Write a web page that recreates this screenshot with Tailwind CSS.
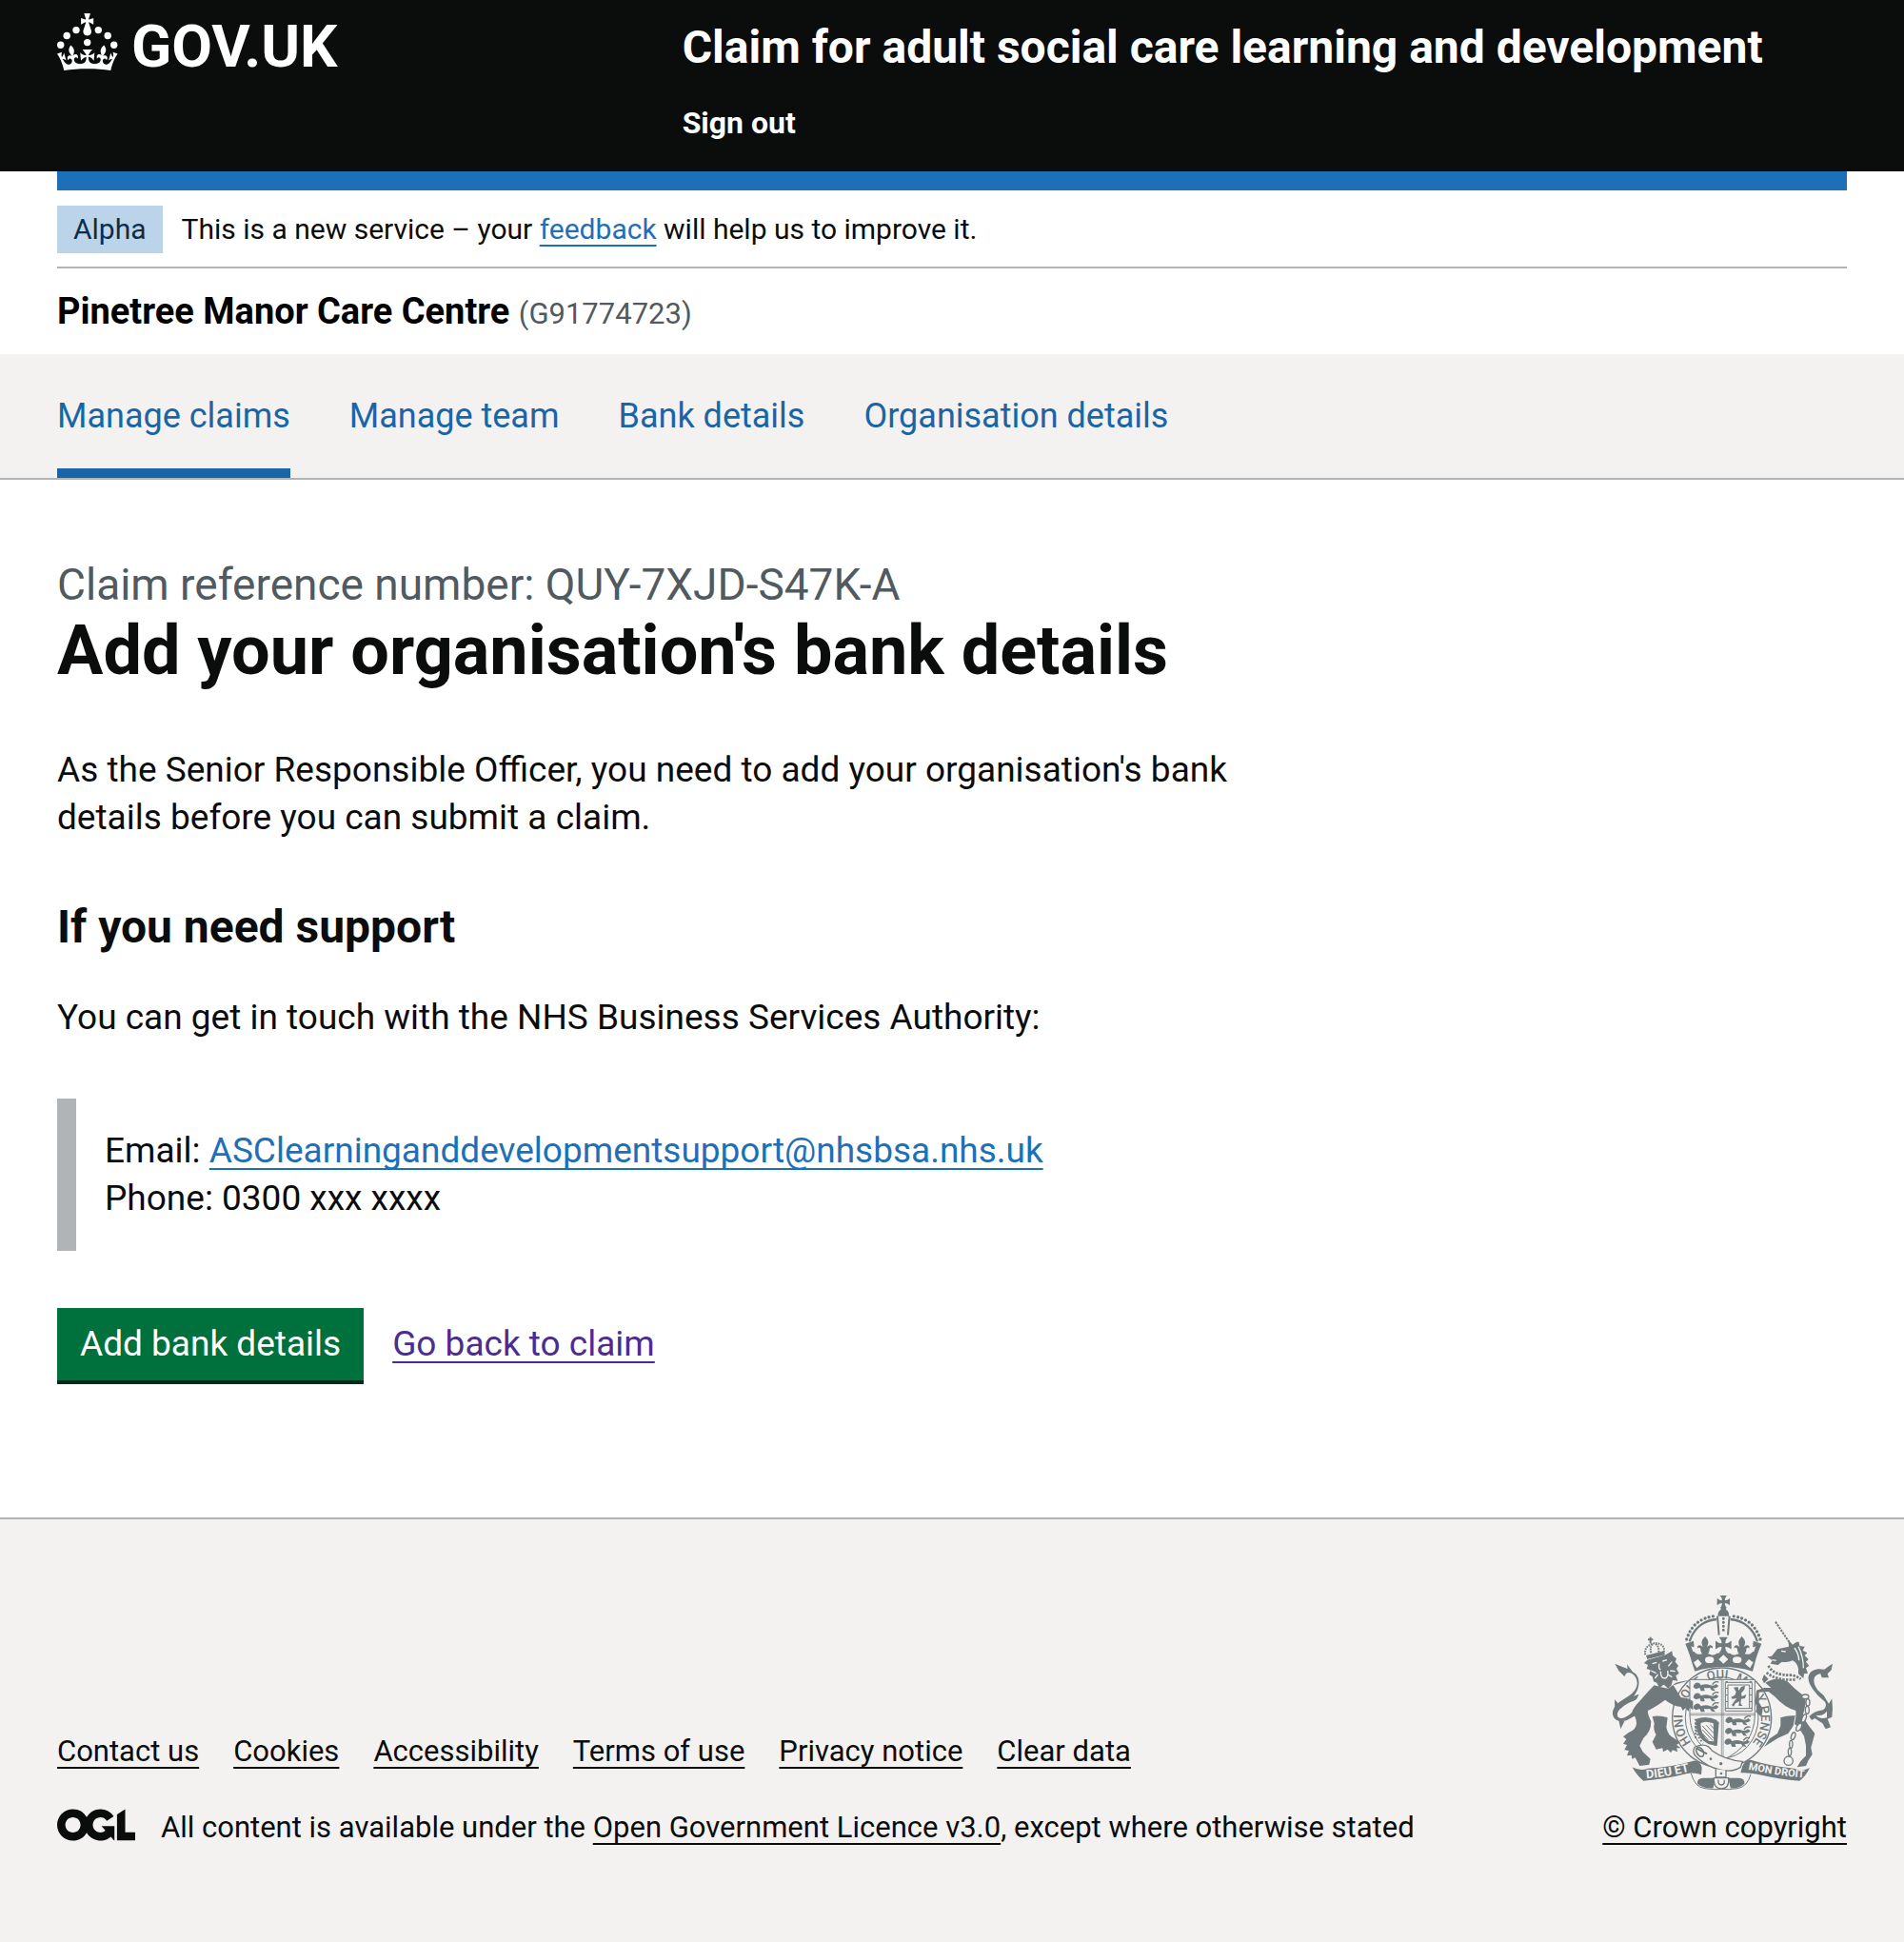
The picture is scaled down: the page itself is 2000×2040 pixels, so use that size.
<!DOCTYPE html>
<html lang="en">
<head>
<meta charset="utf-8">
<meta name="viewport" content="width=device-width, initial-scale=1">
<title>Add your organisation's bank details</title>
<script src="https://cdn.jsdelivr.net/npm/@tailwindcss/browser@4"></script>
</head>
<body class="bg-white font-[Roboto,sans-serif] text-[#0b0c0c]">

<header class="bg-[#0b0c0c] px-[60px] text-white">
  <div class="flex items-start pb-[31px]">
    <a href="#" class="w-1/3 pt-[14px]" aria-label="GOV.UK">
      <svg class="block h-[80px] w-[300px] fill-white" viewBox="0 0 300 80" aria-hidden="true">
        <circle cx="20" cy="17.6" r="3.7"/><circle cx="10.2" cy="23.5" r="3.7"/><circle cx="3.7" cy="33.2" r="3.7"/>
        <circle cx="31.7" cy="30.6" r="3.7"/><circle cx="43.3" cy="17.6" r="3.7"/><circle cx="53.2" cy="23.5" r="3.7"/><circle cx="59.7" cy="33.2" r="3.7"/>
        <path d="M33.1,9.8c.2-.1.3-.3.5-.5l4.6,2.4v-6.8l-4.6,1.5c-.1-.2-.3-.3-.5-.5l1.9-5.9h-6.7l1.9,5.9c-.2.1-.3.3-.5.5l-4.6-1.5v6.8l4.6-2.4c.1.2.3.3.5.5l-2.6,8c-.9,2.8,1.2,5.7,4.1,5.7h0c3,0,5.1-2.9,4.1-5.7l-2.6-8ZM37,37.9s-3.4,3.8-4.1,6.1c2.2,0,4.2-.5,6.4-2.8l-.7,8.5c-2-2.8-4.4-4.1-5.7-3.8.1,3.1.5,6.7,5.8,7.2,3.7.3,6.7-1.5,7-3.8.4-2.6-2-4.3-3.7-1.6-1.4-4.5,2.4-6.1,4.9-3.2-1.9-4.5-1.8-7.7,2.4-10.9,3,4,2.6,7.3-1.2,11.1,2.4-1.3,6.2,0,4,4.6-1.2-2.8-3.7-2.2-4.2.2-.3,1.7.7,3.7,3,4.2,1.9.3,4.7-.9,7-5.9-1.3,0-2.4.7-3.9,1.7l2.4-8c.6,2.3,1.4,3.7,2.2,4.5.6-1.6.5-2.8,0-5.3l5,1.8c-2.6,3.6-5.2,8.7-7.3,17.5-7.4-1.1-15.7-1.7-24.5-1.7h0c-8.8,0-17.1.6-24.5,1.7-2.1-8.9-4.7-13.9-7.3-17.5l5-1.8c-.5,2.5-.6,3.7,0,5.3.8-.8,1.6-2.3,2.2-4.5l2.4,8c-1.5-1-2.6-1.7-3.9-1.7,2.3,5,5.2,6.2,7,5.9,2.3-.4,3.3-2.4,3-4.2-.5-2.4-3-3.1-4.2-.2-2.2-4.6,1.6-6,4-4.6-3.7-3.7-4.2-7.1-1.2-11.1,4.2,3.2,4.3,6.4,2.4,10.9,2.5-2.8,6.3-1.3,4.9,3.2-1.8-2.7-4.1-1-3.7,1.6.3,2.3,3.3,4.1,7,3.8,5.4-.5,5.7-4.2,5.8-7.2-1.3-.2-3.7,1-5.7,3.8l-.7-8.5c2.2,2.3,4.2,2.7,6.4,2.8-.7-2.3-4.1-6.1-4.1-6.1h10.6,0Z"/>
        <text x="78" y="56" class="text-[62px] font-bold">GOV.UK</text>
      </svg>
    </a>
    <div class="flex-1 pt-5 pl-[30px]">
      <a href="#" class="block text-[48px] leading-[60px] font-bold">Claim for adult social care learning and development</a>
      <nav class="mt-[29px]" aria-label="Account">
        <a href="#" class="text-[32px] leading-[40px] font-bold">Sign out</a>
      </nav>
    </div>
  </div>
</header>

<div class="mx-[60px] border-t-20 border-[#1d70b8]"></div>

<div class="mx-[60px] flex items-center gap-5 border-b-2 border-[#b1b4b6] pt-4 pb-[14px] text-[30px] leading-[50px]">
  <strong class="bg-[#bbd4ea] px-[17px] font-normal text-[#0c2d4a]">Alpha</strong>
  <span>This is a new service – your <a href="#" class="text-[#1d70b8] underline decoration-2 underline-offset-[6px] [text-decoration-skip-ink:none]">feedback</a> will help us to improve it.</span>
</div>

<div class="px-[60px] py-5 text-[38px] leading-[50px] font-bold text-black">Pinetree Manor Care Centre <span class="text-[31px] leading-none font-normal text-[#505a5f]">(G91774723)</span></div>

<nav class="border-b-2 border-[#b1b4b6] bg-[#f3f2f1] px-[60px]" aria-label="Service">
  <ul class="flex gap-[62px] text-[36px] leading-[50px] text-[#1a65a6]">
    <li><a href="#" aria-current="page" class="block py-10 shadow-[inset_0_-10px_0_#1a65a6]">Manage claims</a></li>
    <li><a href="#" class="block py-10">Manage team</a></li>
    <li><a href="#" class="block py-10">Bank details</a></li>
    <li><a href="#" class="block py-10">Organisation details</a></li>
  </ul>
</nav>

<main class="px-[60px] pt-20 pb-36 text-[37px] leading-[50px]">
  <div class="w-2/3">
    <h1 class="mb-[60px] text-[72px] leading-[80px] font-bold"><span class="block text-[46px] leading-[60px] font-normal text-[#505a5f]">Claim reference number: QUY-7XJD-S47K-A</span>Add your organisation's bank details</h1>
    <p class="mb-[60px]">As the Senior Responsible Officer, you need to add your organisation's bank details before you can submit a claim.</p>
    <h2 class="mb-10 text-[48px] leading-[60px] font-bold">If you need support</h2>
    <p>You can get in touch with the NHS Business Services Authority:</p>
    <div class="my-[60px] border-l-20 border-[#b1b4b6] p-[30px]">
      <p>Email: <a href="#" class="text-[#1d70b8] underline decoration-2 underline-offset-[6px] [text-decoration-skip-ink:none]">ASClearninganddevelopmentsupport@nhsbsa.nhs.uk</a></p>
      <p>Phone: 0300 xxx xxxx</p>
    </div>
    <div class="flex items-center gap-[30px]">
      <button type="button" class="bg-[#00703c] px-6 py-[13px] text-white shadow-[0_4px_0_#002d18]">Add bank details</button>
      <a href="#" class="text-[#4c2c92] underline decoration-2 underline-offset-[6px] [text-decoration-skip-ink:none]">Go back to claim</a>
    </div>
  </div>
</main>

<footer class="border-t-2 border-[#b1b4b6] bg-[#f3f2f1] px-[60px] pt-20 pb-[100px] text-[31px] leading-[40px]">
  <div class="flex items-end justify-between">
    <div>
      <ul class="mb-10 flex gap-9">
        <li><a href="#" class="underline decoration-2 underline-offset-[6px] [text-decoration-skip-ink:none]">Contact us</a></li>
        <li><a href="#" class="underline decoration-2 underline-offset-[6px] [text-decoration-skip-ink:none]">Cookies</a></li>
        <li><a href="#" class="underline decoration-2 underline-offset-[6px] [text-decoration-skip-ink:none]">Accessibility</a></li>
        <li><a href="#" class="underline decoration-2 underline-offset-[6px] [text-decoration-skip-ink:none]">Terms of use</a></li>
        <li><a href="#" class="underline decoration-2 underline-offset-[6px] [text-decoration-skip-ink:none]">Privacy notice</a></li>
        <li><a href="#" class="underline decoration-2 underline-offset-[6px] [text-decoration-skip-ink:none]">Clear data</a></li>
      </ul>
      <div class="flex items-start gap-[27px]">
        <svg class="h-[34px] w-[82px] fill-[#0b0c0c]" viewBox="0 0 483.2 195.7" aria-hidden="true"><path d="M421.5 142.8V.1l-50.7 32.3v161.1h112.4v-50.7zm-122.3-9.6A47.12 47.12 0 0 1 221 97.8c0-26 21.1-47.1 47.1-47.1 16.7 0 31.4 8.7 39.7 21.8l42.7-27.2A97.63 97.63 0 0 0 268.1 0c-36.5 0-68.3 20.1-85.1 49.7A98 98 0 0 0 97.8 0C43.9 0 0 43.9 0 97.8s43.9 97.8 97.8 97.8c36.5 0 68.3-20.1 85.1-49.7a97.76 97.76 0 0 0 149.6 25.4l19.4 22.2h3v-87.8h-80l24.3 27.5zM97.8 145c-26 0-47.1-21.1-47.1-47.1s21.1-47.1 47.1-47.1 47.1 21.1 47.1 47.1S123.8 145 97.8 145"/></svg>
        <span>All content is available under the <a href="#" class="underline decoration-2 underline-offset-[6px] [text-decoration-skip-ink:none]">Open Government Licence v3.0</a>, except where otherwise stated</span>
      </div>
    </div>
    <a href="#" class="flex flex-col items-end gap-[19px]">
      <svg class="mr-[14px] h-[205px] w-[234px]" viewBox="69 47 702 615" fill="#707a7c" stroke="none" aria-hidden="true">
        <defs>
          <path id="garter" d="M357 540A124 124 0 1 1 481 540"/>
          <path id="motto-left" d="M182 624Q256 617 340 596"/>
          <path id="motto-right" d="M502 595Q590 614 684 622"/>
          <path id="patee" d="M-11-20H11Q3-10 5-4Q12-4 20-11V11Q12 4 5 4Q3 10 11 20H-11Q-3 10-5 4Q-12 4-20 11V-11Q-12-4-5-4Q-3-10-11-20Z"/>
          <g id="fleur"><path d="M0-30C16-14 10-6 5 6C10-4 26-6 24 8C20 2 12 6 14 16L8 28H-8L-14 16C-12 6-20 2-24 8C-26-6-10-4-5 6C-10-6-16-14 0-30Z"/></g>
          <g id="leopard"><path d="M2 4Q10-6 20 0L24 6Q40 0 54 6Q64 10 72 2L80 8Q72 18 62 14L70 24L58 22L52 14Q42 16 34 14L36 24L24 24L20 14L8 18L0 12Z"/><path d="M60 4Q66-8 80-4" fill="none" stroke="#707a7c" stroke-width="4"/></g>
        </defs>

        <!-- royal crown -->
        <use href="#patee" x="424" y="67"/>
        <path d="M418 84h12l3 8q10 6 8 20h-34q-2-14 8-20z"/>
        <g fill="none" stroke="#707a7c">
          <path d="M405 112l5 60M443 112l-5 60" stroke-width="6"/>
          <path d="M317 192C330 152 360 126 402 122M531 192C518 152 488 126 446 122" stroke-width="7"/>
          <path d="M308 185C322 142 350 117 396 112M540 185C526 142 498 117 452 112" stroke-width="10" stroke-linecap="round" stroke-dasharray="0 13"/>
          <path d="M424 120V168" stroke-width="9" stroke-linecap="round" stroke-dasharray="0 12"/>
        </g>
        <path d="M304 199L330 190L333 226Q346 238 362 228L382 232Q392 238 402 230L419 226H429L446 230Q456 238 466 232L486 228Q502 238 515 226L518 190L544 199Q530 232 524 256L516 286Q424 258 334 286L324 256Q318 232 304 199Z"/>
        <path d="M322 206Q330 214 340 206L338 224L328 224ZM526 206Q518 214 508 206L510 224L520 224Z" fill="#f3f2f1"/>
        <use href="#fleur" x="366" y="206"/><use href="#fleur" x="482" y="206"/>
        <g transform="translate(424 203) scale(1.25)"><use href="#patee"/></g>
        <g fill="#f3f2f1"><ellipse cx="380" cy="250" rx="14" ry="10"/><ellipse cx="467" cy="250" rx="14" ry="10"/><path d="M424 234l15 14-15 14-15-14zM344 248l12 14-16 14-10-18zM504 248l-12 14 16 14 10-18z"/></g>

        <!-- garter -->
        <ellipse cx="419" cy="432" rx="156" ry="157" fill="#f3f2f1" stroke="#707a7c" stroke-width="4"/>
        <ellipse cx="419" cy="432" rx="115" ry="128" fill="none" stroke="#707a7c" stroke-width="3"/>
        <g class="text-[39px] font-medium">
          <text><textPath href="#garter" startOffset="46">HONI</textPath></text>
          <text><textPath href="#garter" startOffset="166">SOI</textPath></text>
          <text><textPath href="#garter" startOffset="238">T</textPath></text>
          <text><textPath href="#garter" startOffset="280">QUI</textPath></text>
          <text><textPath href="#garter" startOffset="366">M</textPath></text>
          <text><textPath href="#garter" startOffset="450">Y PENSE</textPath></text>
        </g>

        <!-- shield -->
        <path d="M318 312H523V425Q521 520 421 566Q320 520 318 425Z" fill="#f3f2f1" stroke="#707a7c" stroke-width="3"/>
        <path d="M418 312V560M423 312V560M318 419H523M318 424H523" stroke="#707a7c" stroke-width="2"/>
        <use href="#leopard" x="329" y="324"/><use href="#leopard" x="329" y="357"/><use href="#leopard" x="329" y="390"/>
        <use href="#leopard" x="430" y="432"/><use href="#leopard" x="429" y="466"/><use href="#leopard" x="427" y="500"/>
        <g fill="none" stroke="#707a7c"><path d="M430 321H514V411H430Z" stroke-width="3"/><path d="M438 329H506V403H438Z" stroke-width="3"/><path d="M434 317V415M510 317V415" stroke-width="7" stroke-dasharray="3 18"/></g>
        <path d="M456 337l14-2 2 12 8-12 12-4-2 12-10 12 2 10 14-6-4 12-12 2-2 14 6 8h-12l2-14-12 6-6 10-6-4 8-12 8-10-14 2-4-6 12-6 4-10z"/>
        <path d="M338 436Q370 424 404 440L402 456L392 450Q366 440 352 450Q352 490 378 505L404 508L402 520L378 516Q346 500 340 470Z"/>
        <path d="M392 440L410 445L404 520H394Z"/>
        <path d="M358 458L396 500M358 470L390 504M370 456L398 486M382 454L399 472M358 482L376 502" stroke="#707a7c" stroke-width="3"/>
        <path d="M336 436V498M340 440Q330 480 360 512" fill="none" stroke="#707a7c" stroke-width="6" stroke-dasharray="5 6"/>

        <!-- lion supporter -->
        <g fill="none" stroke="#707a7c">
          <path d="M178 234C168 190 246 184 236 226M196 228Q190 204 206 198M220 226Q222 204 206 198" stroke-width="6" stroke-dasharray="5 3"/>
          <path d="M194 178V198M186 186H202" stroke-width="6"/>
        </g>
        <path d="M180 236L236 222L240 234L184 248Z"/>
        <path d="M184 250L242 234L262 222L264 236L276 246L272 256L282 268L276 278L284 292L274 300L280 316L264 314L260 330L250 340L236 328L222 338L214 322L204 318L200 302L190 296L194 282L182 278L186 266L174 260Z"/>
        <path d="M200 262L214 258M232 254L246 250M196 284L212 292M208 308L218 296M262 256L250 270M272 286L256 284M262 304L248 296M222 262Q218 276 226 282" fill="none" stroke="#f3f2f1" stroke-width="4"/>
        <path d="M226 286Q226 308 240 308Q252 304 248 284" fill="none" stroke="#f3f2f1" stroke-width="4"/>
        <path d="M206 330Q180 356 162 378Q142 398 136 414Q150 432 150 450Q150 470 124 480L108 492L118 500L108 514L120 518L112 534L126 536L120 552L134 550L136 562L146 558L160 584L190 580L194 562L170 540L160 520L172 496Q196 478 196 444Q184 420 186 410Q220 392 240 376Q262 394 290 398L296 410L304 402L314 412L318 400L328 408V380L312 372L290 368L266 330L318 314L300 316L274 322L250 340L228 336Z"/>
        <path d="M200 428Q226 424 248 432L244 462Q248 488 270 498L288 510L276 518L290 528L276 528L280 540L264 534L258 542L248 532L234 540L232 528L212 532L206 520L200 508L212 486Q202 470 206 450Z"/>
        <path d="M120 440C90 452 66 430 78 404C92 372 148 366 152 326C154 300 130 284 118 292L112 302L94 284L82 262L100 270L122 278L120 264L138 288C170 304 158 350 136 370C160 360 156 376 132 382C104 396 82 414 92 430Q106 444 142 410L146 426Z"/>
        <path d="M82 374Q90 390 104 394L88 410Q78 396 82 374ZM94 440L100 468L112 444ZM158 358L136 366L128 382Q150 380 158 358Z"/>

        <!-- unicorn supporter -->
        <path d="M588 130L630 192" stroke="#707a7c" stroke-width="6" stroke-dasharray="7 3"/>
        <path d="M630 208L628 186L642 202Q656 190 662 194L664 206L680 208L674 220L688 228L680 236L692 248L684 256L694 268L684 276L690 292L678 294L676 308L660 294Q664 262 642 252Q626 260 608 256L596 266L572 262L578 252L562 240L576 238L594 216Z"/>
        <path d="M606 222l14 2M648 212Q662 232 662 252M660 208Q676 240 676 276M578 250l12 2" fill="none" stroke="#f3f2f1" stroke-width="4"/>
        <path d="M566 268Q580 300 640 298Q656 302 668 310M560 290Q590 316 650 312" fill="none" stroke="#707a7c" stroke-width="8" stroke-dasharray="7 4"/>
        <path d="M552 296l14 14-14 14-6-12z"/>
        <path d="M556 322Q590 300 626 318Q650 344 676 362Q686 372 682 392L674 428Q690 456 712 482L700 526L704 548L692 566L684 584L656 588L668 568L684 552L684 520L678 490L660 462L648 452Q654 430 652 410Q616 400 586 366L566 350L536 352L536 384L548 404L544 430L526 414L530 394L524 380L528 346L552 338L574 338Z"/>
        <path d="M604 432Q626 424 650 426L644 458L628 482L596 496L552 524L570 498L594 482L604 458Z"/>
        <path d="M694 428Q712 410 738 408Q752 398 744 382C720 362 688 330 692 302C698 278 722 276 742 280L756 270L768 262L764 282L752 294L756 306L734 306L730 294C706 296 702 322 722 346L740 362L756 388L766 372L768 404L766 430L752 436L762 462L746 468L736 450L712 434L702 440Z"/>
        <path d="M750 412Q738 428 716 424Q726 438 750 432Z" fill="#f3f2f1"/>
        <g fill="#f3f2f1" stroke="#707a7c" stroke-width="4">
          <ellipse cx="682" cy="366" rx="11" ry="7"/><ellipse cx="690" cy="384" rx="6" ry="11"/><ellipse cx="688" cy="408" rx="6" ry="12"/><ellipse cx="678" cy="434" rx="6" ry="13" transform="rotate(22 678 434)"/><ellipse cx="662" cy="462" rx="7" ry="13" transform="rotate(28 662 462)"/><ellipse cx="644" cy="490" rx="6" ry="12" transform="rotate(20 644 490)"/><ellipse cx="637" cy="516" rx="5" ry="12"/><ellipse cx="633" cy="540" rx="5" ry="12"/><circle cx="629" cy="568" r="14"/>
        </g>

        <!-- motto ribbon -->
        <path d="M137 588Q160 602 186 592Q260 588 330 568Q350 566 356 590L354 612Q330 604 310 608Q240 626 172 631Q150 614 137 588Z"/>
        <path d="M696 590Q674 602 646 592Q570 584 510 565Q494 564 484 584L478 606Q500 604 530 610Q600 626 664 631Q684 616 696 590Z"/>
        <g fill="#f3f2f1" class="font-bold">
          <text class="text-[38px]"><textPath href="#motto-left">DIEU ET</textPath></text>
          <text class="text-[33px]"><textPath href="#motto-right">MON DROIT</textPath></text>
        </g>
        <path d="M342 640Q340 622 360 622H398L392 654Q360 656 342 640ZM490 640Q492 622 472 622H440L446 654Q474 656 490 640Z"/>
        <path d="M322 608Q334 652 366 655Q400 660 418 657Q440 660 468 655Q500 650 510 610" fill="none" stroke="#707a7c" stroke-width="3"/>

        <!-- belt and buckle -->
        <path d="M334 524Q372 508 388 536Q430 566 484 570L478 588Q450 606 412 596Q372 586 344 560Q322 544 334 524Z" fill="#f3f2f1" stroke="#707a7c" stroke-width="4"/>
        <path d="M400 594V620H432V598M394 622Q392 656 418 656Q444 654 440 622ZM408 628Q406 644 418 644Q430 642 426 628" fill="#f3f2f1" stroke="#707a7c" stroke-width="4"/>
        <ellipse cx="350" cy="540" rx="10" ry="16" transform="rotate(-30 350 540)" fill="none" stroke="#707a7c" stroke-width="5"/>
        <path d="M338 528L372 546" stroke="#707a7c" stroke-width="6"/>
        <circle cx="384" cy="562" r="4"/><circle cx="416" cy="577" r="5"/><circle cx="417" cy="608" r="4"/>
      </svg>
      <span class="underline decoration-2 underline-offset-[6px] [text-decoration-skip-ink:none]">© Crown copyright</span>
    </a>
  </div>
</footer>
</body>
</html>
